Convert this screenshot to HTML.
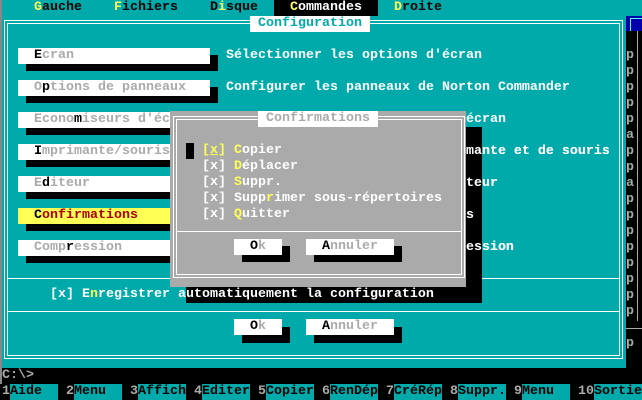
<!DOCTYPE html>
<html><head><meta charset="utf-8"><style>
*{margin:0;padding:0}
body{width:642px;height:400px;overflow:hidden;background:#000;position:relative;font-family:"Liberation Mono",monospace;}
div{position:absolute}
.t{white-space:pre;font-size:13.33px;line-height:16px;height:16px;font-weight:bold}
.y{color:#ffff55}.k{color:#000}.w{color:#fff}.g{color:#aaa}
.ln{background:#fff}
</style></head><body>
<div style="left:0;top:0;width:642px;height:16px;background:#00aaaa"></div>
<div class="t k" style="left:34px;top:0"><span class="y">G</span>auche</div>
<div class="t k" style="left:114px;top:0"><span class="y">F</span>ichiers</div>
<div class="t k" style="left:210px;top:0">D<span class="y">i</span>sque</div>
<div style="left:274px;top:0;width:104px;height:16px;background:#000"></div>
<div class="t w" style="left:290px;top:0"><span class="y">C</span>ommandes</div>
<div class="t k" style="left:394px;top:0"><span class="y">D</span>roite</div>
<div style="left:0;top:0;width:2px;height:384px;background:#888"></div>
<div style="left:626px;top:16px;width:16px;height:352px;background:#000"></div>
<div style="left:626px;top:16px;width:16px;height:15px;background:#0000aa"></div>
<div style="left:630px;top:18px;width:12px;height:1px;background:#55ffff"></div>
<div style="left:630px;top:18px;width:1px;height:13px;background:#55ffff"></div>
<div style="left:637px;top:31px;width:1px;height:290px;background:#aaa"></div>
<div style="left:626px;top:328px;width:16px;height:1px;background:#aaa"></div>
<div class="t g" style="left:626px;top:48px;line-height:16px;height:auto">p
p
p
p
p
a
p
p
a
p
p
p
p
p
p
p
p

p</div>
<div style="left:2px;top:16px;width:624px;height:352px;background:#00aaaa"></div>
<div style="left:4px;top:20px;width:617px;height:337px;border:1px solid #fff"></div>
<div style="left:7px;top:23px;width:611px;height:331px;border:1px solid #fff"></div>
<div class="ln" style="left:8px;top:278px;width:611px;height:1px"></div>
<div class="ln" style="left:8px;top:311px;width:611px;height:1px"></div>
<div style="left:250px;top:16px;width:120px;height:16px;background:#fff"></div>
<div class="t" style="left:258px;top:16px;color:#00aaaa">Configuration</div>
<div style="left:26px;top:55px;width:192px;height:16px;background:#000"></div>
<div style="left:26px;top:87px;width:192px;height:16px;background:#000"></div>
<div style="left:26px;top:119px;width:192px;height:16px;background:#000"></div>
<div style="left:26px;top:151px;width:192px;height:16px;background:#000"></div>
<div style="left:26px;top:183px;width:192px;height:16px;background:#000"></div>
<div style="left:26px;top:215px;width:192px;height:16px;background:#000"></div>
<div style="left:26px;top:247px;width:192px;height:16px;background:#000"></div>
<div style="left:18px;top:48px;width:192px;height:16px;background:#fff"></div>
<div style="left:18px;top:80px;width:192px;height:16px;background:#fff"></div>
<div style="left:18px;top:112px;width:192px;height:16px;background:#fff"></div>
<div style="left:18px;top:144px;width:192px;height:16px;background:#fff"></div>
<div style="left:18px;top:176px;width:192px;height:16px;background:#fff"></div>
<div style="left:18px;top:208px;width:192px;height:16px;background:#ffff55"></div>
<div style="left:18px;top:240px;width:192px;height:16px;background:#fff"></div>
<div class="t g" style="left:34px;top:48px"><span class="k">E</span>cran</div>
<div class="t g" style="left:34px;top:80px">O<span class="k">p</span>tions de panneaux</div>
<div class="t g" style="left:34px;top:112px">Econo<span class="k">m</span>iseurs d'écran</div>
<div class="t g" style="left:34px;top:144px"><span class="k">I</span>mprimante/souris</div>
<div class="t g" style="left:34px;top:176px">E<span class="k">d</span>iteur</div>
<div class="t" style="left:34px;top:208px;color:#aa0000"><span class="k">C</span>onfirmations</div>
<div class="t g" style="left:34px;top:240px">Comp<span class="k">r</span>ession</div>
<div class="t w" style="left:226px;top:48px">Sélectionner les options d'écran</div>
<div class="t w" style="left:226px;top:80px">Configurer les panneaux de Norton Commander</div>
<div class="t w" style="left:226px;top:112px">Configurer les économiseurs d'écran</div>
<div class="t w" style="left:226px;top:144px">Configurer les options d'imprimante et de souris</div>
<div class="t w" style="left:226px;top:176px">Sélectionner les options d'éditeur</div>
<div class="t w" style="left:226px;top:208px">Sélectionner les  confirmations</div>
<div class="t w" style="left:226px;top:240px">Configurer les outils de compression</div>
<div style="left:466px;top:127px;width:16px;height:176px;background:#000"></div>
<div style="left:186px;top:287px;width:296px;height:16px;background:#000"></div>
<div class="t w" style="left:226px;top:144px;clip-path:inset(0 0 0 240px)">Configurer les options d'imprimante et de souris</div>
<div class="t w" style="left:226px;top:176px;clip-path:inset(0 0 0 240px)">Sélectionner les options d'éditeur</div>
<div class="t w" style="left:226px;top:208px;clip-path:inset(0 0 0 240px)">Sélectionner les  confirmations</div>
<div class="t w" style="left:226px;top:240px;clip-path:inset(0 0 0 240px)">Configurer les outils de compression</div>
<div class="t w" style="left:50px;top:287px">[x] E<span class="y">n</span>registrer automatiquement la configuration</div>
<div style="left:242px;top:327px;width:48px;height:16px;background:#000"></div>
<div style="left:314px;top:327px;width:88px;height:16px;background:#000"></div>
<div style="left:234px;top:319px;width:48px;height:16px;background:#fff"></div>
<div style="left:306px;top:319px;width:88px;height:16px;background:#fff"></div>
<div class="t g" style="left:250px;top:319px"><span class="k">O</span>k</div>
<div class="t g" style="left:322px;top:319px"><span class="k">A</span>nnuler</div>
<div style="left:170px;top:111px;width:296px;height:176px;background:#aaa"></div>
<div style="left:173px;top:116px;width:290px;height:160px;border:1px solid #fff"></div>
<div style="left:176px;top:119px;width:284px;height:154px;border:1px solid #fff"></div>
<div class="ln" style="left:177px;top:231px;width:284px;height:1px"></div>
<div style="left:258px;top:111px;width:120px;height:16px;background:#fff"></div>
<div class="t g" style="left:266px;top:111px">Confirmations</div>
<div style="left:186px;top:143px;width:8px;height:16px;background:#000"></div>
<div class="t w" style="left:202px;top:143px"><span class="y">[<u>x</u>]</span> <span class="y">C</span>opier</div>
<div class="t w" style="left:202px;top:159px">[x] <span class="y">D</span>éplacer</div>
<div class="t w" style="left:202px;top:175px">[x] <span class="y">S</span>uppr.</div>
<div class="t w" style="left:202px;top:191px">[x] Supp<span class="y">r</span>imer sous-répertoires</div>
<div class="t w" style="left:202px;top:207px">[x] <span class="y">Q</span>uitter</div>
<div style="left:242px;top:246px;width:48px;height:16px;background:#000"></div>
<div style="left:314px;top:246px;width:88px;height:16px;background:#000"></div>
<div style="left:234px;top:239px;width:48px;height:16px;background:#fff"></div>
<div style="left:306px;top:239px;width:88px;height:16px;background:#fff"></div>
<div class="t g" style="left:250px;top:239px"><span class="k">O</span>k</div>
<div class="t g" style="left:322px;top:239px"><span class="k">A</span>nnuler</div>
<div class="t g" style="left:2px;top:368px">C:\&gt;</div>
<div class="t g" style="left:2px;top:384px">1</div><div class="t k" style="left:10px;top:384px;width:48px;background:#00aaaa">Aide</div>
<div class="t g" style="left:66px;top:384px">2</div><div class="t k" style="left:74px;top:384px;width:48px;background:#00aaaa">Menu</div>
<div class="t g" style="left:130px;top:384px">3</div><div class="t k" style="left:138px;top:384px;width:48px;background:#00aaaa">Affich</div>
<div class="t g" style="left:194px;top:384px">4</div><div class="t k" style="left:202px;top:384px;width:48px;background:#00aaaa">Editer</div>
<div class="t g" style="left:258px;top:384px">5</div><div class="t k" style="left:266px;top:384px;width:48px;background:#00aaaa">Copier</div>
<div class="t g" style="left:322px;top:384px">6</div><div class="t k" style="left:330px;top:384px;width:48px;background:#00aaaa">RenDép</div>
<div class="t g" style="left:386px;top:384px">7</div><div class="t k" style="left:394px;top:384px;width:48px;background:#00aaaa">CréRép</div>
<div class="t g" style="left:450px;top:384px">8</div><div class="t k" style="left:458px;top:384px;width:48px;background:#00aaaa">Suppr.</div>
<div class="t g" style="left:514px;top:384px">9</div><div class="t k" style="left:522px;top:384px;width:48px;background:#00aaaa">Menu</div>
<div class="t g" style="left:578px;top:384px">10</div><div class="t k" style="left:594px;top:384px;width:48px;background:#00aaaa">Sortie</div>
</body></html>
